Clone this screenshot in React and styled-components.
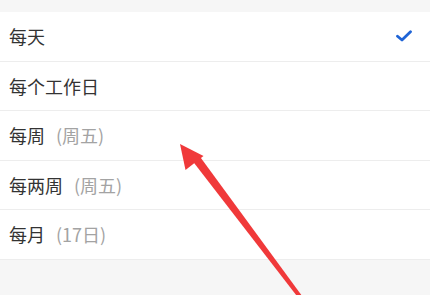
import React from 'react';
import styled, { createGlobalStyle } from 'styled-components';

const GlobalStyle = createGlobalStyle`
  html, body {
    margin: 0;
    padding: 0;
    background: #f6f6f6;
    font-family: "Noto Sans CJK SC", "Noto Sans", sans-serif;
  }
`;

const Screen = styled.div`
  position: relative;
  width: 430px;
  height: 295px;
  overflow: hidden;
  background: #f6f6f6;
  padding-top: 12px;
  box-sizing: border-box;
`;

const List = styled.ul`
  list-style: none;
  margin: 0;
  padding: 0;
  background: #ffffff;
`;

const Row = styled.li`
  display: flex;
  align-items: center;
  justify-content: space-between;
  height: 48.5px;
  padding: 0 18px 0 9px;
  border-bottom: 1px solid #ededed;
  font-size: 18px;
  color: #333333;
`;

const Label = styled.span`
  display: flex;
  align-items: center;
`;

const Hint = styled.span`
  color: #a3a3a3;
  margin-left: 11px;
`;

const Check = styled.svg`
  width: 16px;
  height: 12px;
`;

const Arrow = styled.svg`
  position: absolute;
  left: 0;
  top: 0;
  pointer-events: none;
`;

const options = [
  { label: '每天', selected: true },
  { label: '每个工作日' },
  { label: '每周', hint: '(周五)' },
  { label: '每两周', hint: '(周五)' },
  { label: '每月', hint: '(17日)' },
];

export default function App() {
  return (
    <>
      <GlobalStyle />
      <Screen>
        <List>
          {options.map((o) => (
            <Row key={o.label}>
              <Label>
                {o.label}
                {o.hint && <Hint>{o.hint}</Hint>}
              </Label>
              {o.selected && (
                <Check viewBox="0 0 16 12">
                  <path d="M1.5 6.2 L6 10 L14.5 1.8" fill="none" stroke="#1f64d6" strokeWidth="2.8" strokeLinecap="round" strokeLinejoin="round" />
                </Check>
              )}
            </Row>
          ))}
        </List>
        <Arrow width="430" height="295" viewBox="0 0 430 295">
          <polygon points="180,144 203.5,156 185.5,170" fill="#f0393a" />
          <polygon points="191,159 198,154 305,300 301.5,302" fill="#f0393a" />
        </Arrow>
      </Screen>
    </>
  );
}
